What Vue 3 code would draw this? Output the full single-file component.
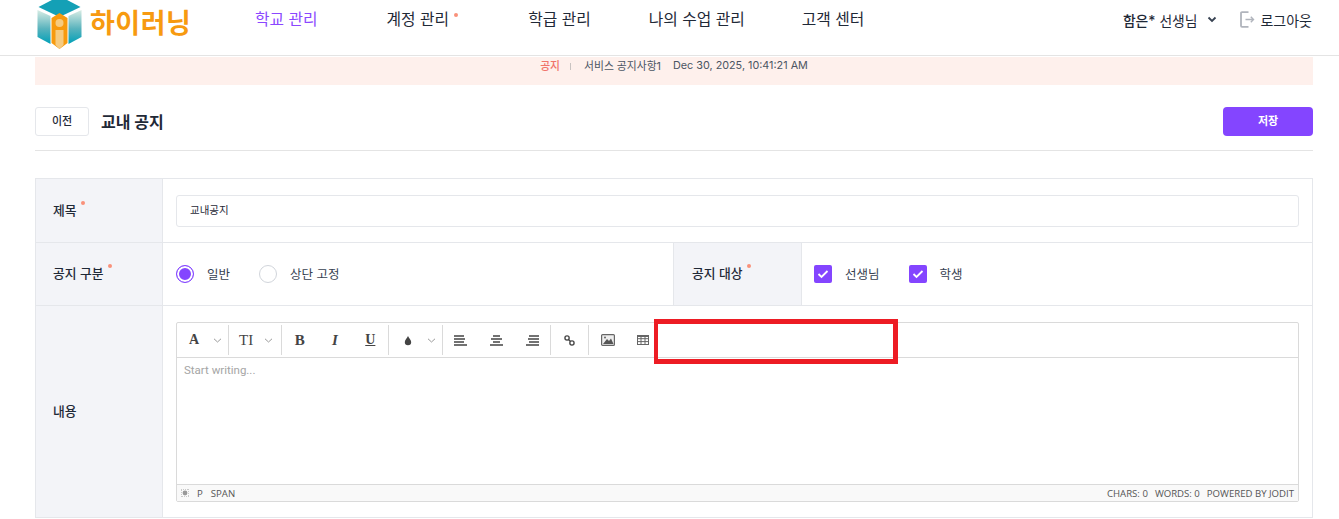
<script setup>
const nav = [
  { label: '학교 관리', active: true },
  { label: '계정 관리', dot: true },
  { label: '학급 관리' },
  { label: '나의 수업 관리' },
  { label: '고객 센터' },
]
</script>

<template>
  <div class="page">
    <header class="header">
      <div class="logo">
        <svg class="logo-mark" width="47" height="50" viewBox="0 0 46 50">
          <defs>
            <linearGradient id="side" x1="0" y1="0" x2="0" y2="1">
              <stop offset="0" stop-color="#d8ece4" />
              <stop offset="0.55" stop-color="#59b3bd" />
              <stop offset="1" stop-color="#00a0b8" />
            </linearGradient>
          </defs>
          <path d="M23 -4 L44 7 L23 17 L2 7 Z" fill="#14a0b6" />
          <path d="M1 10 L14 16 L14 44 L1 37 Z" fill="url(#side)" />
          <path d="M45 10 L32 16 L32 44 L45 37 Z" fill="url(#side)" />
          <path d="M15 18 L23 13 L31 18 L31 43 L23 49 L15 43 Z" fill="#f79a0e" />
          <path d="M19 30 H27 V45 L23 49 L19 45 Z" fill="#f6cb80" />
          <circle cx="23" cy="23" r="4" fill="#f6cb80" />
        </svg>
        <span class="logo-text">하이러닝</span>
      </div>
      <nav class="nav">
        <a v-for="item in nav" :key="item.label" class="nav-item" :class="{ active: item.active }">
          {{ item.label }}<i v-if="item.dot" class="req nav-req"></i>
        </a>
      </nav>
      <div class="user">
        <span class="user-name"><b>함은*</b> 선생님</span>
        <svg width="10" height="7" viewBox="0 0 10 7" class="chev"><path d="M1.5 1.5 L5 5 L8.5 1.5" fill="none" stroke="#374151" stroke-width="1.8" /></svg>
        <svg width="15" height="17" viewBox="0 0 15 17" class="logout-icon">
          <path d="M8.5 1.2 H2 A1 1 0 0 0 1 2.2 V14.8 A1 1 0 0 0 2 15.8 H8.5" fill="none" stroke="#b0b4bc" stroke-width="1.8" />
          <path d="M5.5 8.5 H13.5 M10.8 5.8 L13.5 8.5 L10.8 11.2" fill="none" stroke="#b0b4bc" stroke-width="1.4" />
        </svg>
        <span class="logout">로그아웃</span>
      </div>
    </header>

    <main class="main">
      <div class="notice">
        <span class="notice-tag">공지</span>
        <span class="notice-sep"></span>
        <span>서비스 공지사항1</span>
        <span class="notice-date">Dec 30, 2025, 10:41:21 AM</span>
      </div>

      <div class="title-row">
        <button class="back">이전</button>
        <h1 class="title">교내 공지</h1>
        <button class="save">저장</button>
      </div>

      <section class="form">
        <div class="row row-title">
          <div class="label">제목<i class="req"></i></div>
          <div class="cell">
            <div class="input">교내공지</div>
          </div>
        </div>
        <div class="row row-type">
          <div class="label">공지 구분<i class="req"></i></div>
          <div class="cell cell-radio">
            <span class="radio on"></span><span class="opt">일반</span>
            <span class="radio"></span><span class="opt">상단 고정</span>
          </div>
          <div class="label label-mid">공지 대상<i class="req"></i></div>
          <div class="cell cell-check">
            <span class="check"><svg width="12" height="10" viewBox="0 0 12 10"><path d="M1.5 5 L4.5 8 L10.5 2" fill="none" stroke="#fff" stroke-width="1.8" /></svg></span><span class="opt">선생님</span>
            <span class="check"><svg width="12" height="10" viewBox="0 0 12 10"><path d="M1.5 5 L4.5 8 L10.5 2" fill="none" stroke="#fff" stroke-width="1.8" /></svg></span><span class="opt">학생</span>
          </div>
        </div>
        <div class="row row-content">
          <div class="label">내용</div>
          <div class="cell cell-editor">
            <div class="editor">
              <div class="toolbar">
                <div class="group">
                  <span class="tool t-a"><span class="glyph serif">A</span><svg class="caret" width="9" height="5" viewBox="0 0 9 5"><path d="M1 .8 L4.5 4 L8 .8" fill="none" stroke="#9a9a9a" /></svg></span>
                </div>
                <div class="group">
                  <span class="tool t-t"><span class="glyph serif tt">TI</span><svg class="caret" width="9" height="5" viewBox="0 0 9 5"><path d="M1 .8 L4.5 4 L8 .8" fill="none" stroke="#9a9a9a" /></svg></span>
                </div>
                <div class="group g3">
                  <span class="tool"><span class="glyph serif b">B</span></span>
                  <span class="tool"><span class="glyph serif i">I</span></span>
                  <span class="tool"><span class="glyph serif u">U</span></span>
                </div>
                <div class="group">
                  <span class="tool t-c">
                    <svg width="8" height="11" viewBox="0 0 10 12"><path d="M5 .5 C6 3 9 5.5 9 8 A4 4 0 0 1 1 8 C1 5.5 4 3 5 .5 Z" fill="#444" /></svg>
                    <svg class="caret" width="9" height="5" viewBox="0 0 9 5"><path d="M1 .8 L4.5 4 L8 .8" fill="none" stroke="#9a9a9a" /></svg>
                  </span>
                </div>
                <div class="group g3">
                  <span class="tool t-al"><svg width="13" height="11" viewBox="0 0 13 11"><path d="M0 1 H10 M0 4 H11 M0 7 H10 M0 10 H13" stroke="#444" stroke-width="1.4" /></svg></span>
                  <span class="tool t-al"><svg width="13" height="11" viewBox="0 0 13 11"><path d="M3 1 H10 M1 4 H12 M3 7 H10 M0 10 H13" stroke="#444" stroke-width="1.4" /></svg></span>
                  <span class="tool t-al"><svg width="13" height="11" viewBox="0 0 13 11"><path d="M3 1 H13 M2 4 H13 M3 7 H13 M0 10 H13" stroke="#444" stroke-width="1.4" /></svg></span>
                </div>
                <div class="group">
                  <span class="tool t-l"><svg width="11" height="11" viewBox="0 0 13 13"><circle cx="3.6" cy="3.6" r="2.5" fill="none" stroke="#444" stroke-width="1.6" /><circle cx="9.4" cy="9.4" r="2.5" fill="none" stroke="#444" stroke-width="1.6" /><path d="M5.5 5.5 L7.5 7.5" stroke="#444" stroke-width="1.6" /></svg></span>
                </div>
                <div class="group last">
                  <span class="tool t-im"><svg width="14" height="12" viewBox="0 0 14 12"><rect x=".6" y=".6" width="12.8" height="10.8" rx="1" fill="#eee" stroke="#666" stroke-width="1.2" /><path d="M2 10 L6 5 L8 7 L10 4.5 L12.5 10 Z" fill="#555" /><circle cx="4" cy="3.6" r="1" fill="#666" /></svg></span>
                  <span class="tool t-g"><svg width="12" height="10" viewBox="0 0 12 10"><rect x=".5" y=".5" width="11" height="9" fill="none" stroke="#666" /><path d="M.5 1.5 H11.5 M.5 3.7 H11.5 M.5 6.6 H11.5 M4 .5 V9.5 M8 .5 V9.5" stroke="#666" /></svg></span>
                </div>
              </div>
              <div class="workplace">Start writing...</div>
              <div class="status">
                <div class="status-left">
                  <svg width="8" height="8" viewBox="0 0 8 8"><path d="M0 0 H8 V8 H0 Z" fill="none" stroke="#999" stroke-dasharray="1 1" /><circle cx="4" cy="4" r="2.4" fill="#999" /></svg>
                  <span>P</span><span>SPAN</span>
                </div>
                <div class="status-right">
                  <span>CHARS: 0</span><span>WORDS: 0</span><span>POWERED BY JODIT</span>
                </div>
              </div>
            </div>
          </div>
        </div>
      </section>
    </main>
    <div class="highlight"></div>
  </div>
</template>

<style>
html, body { margin: 0; padding: 0; background: #fff; overflow: hidden; }
</style>

<style scoped>
.page {
  position: relative;
  width: 1339px;
  height: 519px;
  overflow: hidden;
  font-family: Inter, "Noto Sans CJK KR", sans-serif;
  color: #1f2937;
}
.header {
  height: 55px;
  border-bottom: 1px solid #e4e4e4;
  display: flex;
  align-items: center;
  padding: 0 27px 0 36px;
  position: relative;
}
.logo {
  width: 219px;
  display: flex;
  align-items: center;
  gap: 7px;
  margin-top: -5px;
  height: 50px;
  flex: none;
}
.logo-mark { flex: none; }
.logo-text {
  font-size: 27px;
  font-weight: 700;
  color: #f79a10;
  line-height: 30px;
  letter-spacing: .5px;
  margin-top: -2px;
  white-space: nowrap;
}
.nav {
  display: flex;
  gap: 57px;
  margin-top: -16px;
  align-items: center;
  height: 38px;
}
.nav-item {
  font-size: 15.8px;
  color: #1f2937;
  position: relative;
  line-height: 20px;
  white-space: nowrap;
}
.nav-item:nth-child(1) { margin-right: 12px; }
.nav-item:nth-child(2) { margin-right: 22px; }
.nav-item:nth-child(3) { margin-right: 1px; }
.nav-item.active { color: #8b47ff; }
.req {
  display: inline-block;
  width: 4px;
  height: 4px;
  border-radius: 50%;
  background-color: #f9917a;
  position: relative;
  top: -7px;
  margin-left: 4px;
}
.row-type .req { top: -6px; }
.nav-item .nav-req { position: absolute; top: 3px; right: -9px; margin: 0; }
.user {
  margin-left: auto;
  display: flex;
  align-items: center;
  margin-top: -16px;
  font-size: 13.8px;
  white-space: nowrap;
}
.user-name b { font-weight: 500; }
.chev { margin-left: 10px; }
.logout-icon { margin-left: 23px; }
.logout { margin-left: 5px; font-size: 14px; }
.main { padding: 0 26px 0 35px; }
.notice {
  height: 28px;
  margin-top: 1px;
  background: #fef0ec;
  display: flex;
  align-items: center;
  justify-content: center;
  font-size: 10.8px;
  color: #4b5563;
  padding-bottom: 12px;
  box-sizing: border-box;
}
.notice-tag { color: #f0746a; font-weight: 500; }
.notice-sep { width: 1px; height: 7px; background: #c9c3c1; margin: 2px 13px 0 10px; }
.notice-date { margin-left: 12px; }
.title-row {
  display: flex;
  align-items: center;
  margin-top: 22px;
  height: 29px;
  padding-bottom: 14px;
  border-bottom: 1px solid #e4e4e4;
}
.back {
  width: 54px;
  height: 29px;
  box-sizing: border-box;
  border: 1px solid #e5e7eb;
  border-radius: 3px;
  background: #fff;
  font: 500 11px Inter, "Noto Sans CJK KR", sans-serif;
  color: #1f2937;
  padding: 0 0 3px;
}
.title {
  margin: 0 0 0 12px;
  font-size: 16px;
  font-weight: 700;
  line-height: 20px;
  color: #1f2937;
}
.save {
  margin-left: auto;
  width: 90px;
  height: 29px;
  border: 0;
  border-radius: 4px;
  background: #8445ff;
  color: #fff;
  font: 600 11px Inter, "Noto Sans CJK KR", sans-serif;
  padding: 0 0 3px;
}
.form {
  margin-top: 27px;
  border: 1px solid #e5e7eb;
}
.row { display: flex; border-bottom: 1px solid #e5e7eb; }
.row:last-child { border-bottom: 0; }
.row-title { height: 63px; }
.row-type { height: 62px; }
.row-content { height: 211px; }
.label {
  width: 127px;
  flex: none;
  box-sizing: border-box;
  background: #f3f4f8;
  border-right: 1px solid #e5e7eb;
  padding: 0 0 2px 17px;
  display: flex;
  align-items: center;
  font-size: 12.8px;
  font-weight: 500;
  color: #1f2937;
}
.row-type .label { padding-bottom: 4px; }
.row-type .label-mid {
  width: 129px;
  border-left: 1px solid #e5e7eb;
  padding-left: 18px;
}
.cell { flex: 1; display: flex; align-items: center; padding: 0 13px; min-width: 0; }
.input {
  flex: 1;
  height: 32px;
  box-sizing: border-box;
  border: 1px solid #e5e7eb;
  border-radius: 3px;
  padding: 0 13px 2px;
  display: flex;
  align-items: center;
  font-size: 10.5px;
  color: #1f2937;
}
.cell-radio { flex: none; width: 510px; box-sizing: border-box; }
.cell-check { padding-left: 12px; }
.radio {
  width: 18px;
  height: 18px;
  box-sizing: border-box;
  border: 1px solid #d1d5db;
  border-radius: 50%;
  flex: none;
}
.radio.on {
  border-color: #8445ff;
  background: #8445ff;
  box-shadow: inset 0 0 0 2px #fff;
}
.opt { font-size: 12.5px; margin-left: 13px; margin-right: 29px; padding-bottom: 2px; color: #374151; }
.check {
  width: 18px;
  height: 18px;
  border-radius: 2px;
  background: #8445ff;
  display: flex;
  align-items: center;
  justify-content: center;
  flex: none;
}
.cell-editor { padding: 16px 13px 15px; align-items: stretch; }
.editor {
  flex: 1;
  border: 1px solid #dadada;
  border-radius: 2px;
  display: flex;
  flex-direction: column;
  min-width: 0;
}
.toolbar {
  height: 35px;
  box-sizing: border-box;
  border-bottom: 1px solid #dadada;
  display: flex;
  align-items: center;
  flex: none;
}
.group {
  height: 30px;
  display: flex;
  align-items: center;
  border-right: 1px solid #dadada;
}
.group.last { border-right: 0; }
.tool {
  width: 35.33px;
  height: 30px;
  display: flex;
  align-items: center;
  justify-content: center;
  color: #444;
  box-sizing: border-box;
}
.tool.t-a { width: 51px; justify-content: flex-start; padding-left: 12px; gap: 14px; }
.tool.t-t { width: 52px; justify-content: flex-start; padding-left: 10px; gap: 11px; }
.tool.t-c { width: 53px; justify-content: flex-start; padding-left: 15px; gap: 15px; }
.tool.t-al { width: 35.67px; }
.tool.t-l { width: 37px; }
.tool.t-im { width: 38px; padding-left: 1px; }
.tool.t-g { width: 33px; }
.glyph { line-height: 14px; font-size: 14px; }
.serif { font-family: "Liberation Serif", serif; color: #444; font-weight: 700; }
.tt { font-weight: 400; font-size: 15px; }
.b { font-size: 15px; }
.i { font-style: italic; font-size: 15px; }
.u { text-decoration: underline; font-size: 14px; }
.workplace {
  flex: 1;
  padding: 5px 7px;
  font-size: 11.5px;
  line-height: 14px;
  color: #a5a5a5;
  font-family: Roboto, sans-serif;
}
.status {
  height: 17px;
  flex: none;
  box-sizing: border-box;
  border-top: 1px solid #dadada;
  background: #f9f9f9;
  display: flex;
  justify-content: space-between;
  align-items: center;
  padding: 0 4px 0 4px;
  font-size: 9.6px;
  color: #555;
  font-family: "Open Sans", sans-serif;
}
.status-left { display: flex; align-items: center; gap: 8px; }
.status-right { display: flex; gap: 7px; }
.highlight {
  position: absolute;
  left: 654px;
  top: 319px;
  width: 244px;
  height: 45px;
  box-sizing: border-box;
  border: 5px solid #ed1c24;
  border-left-width: 4px;
}
</style>
